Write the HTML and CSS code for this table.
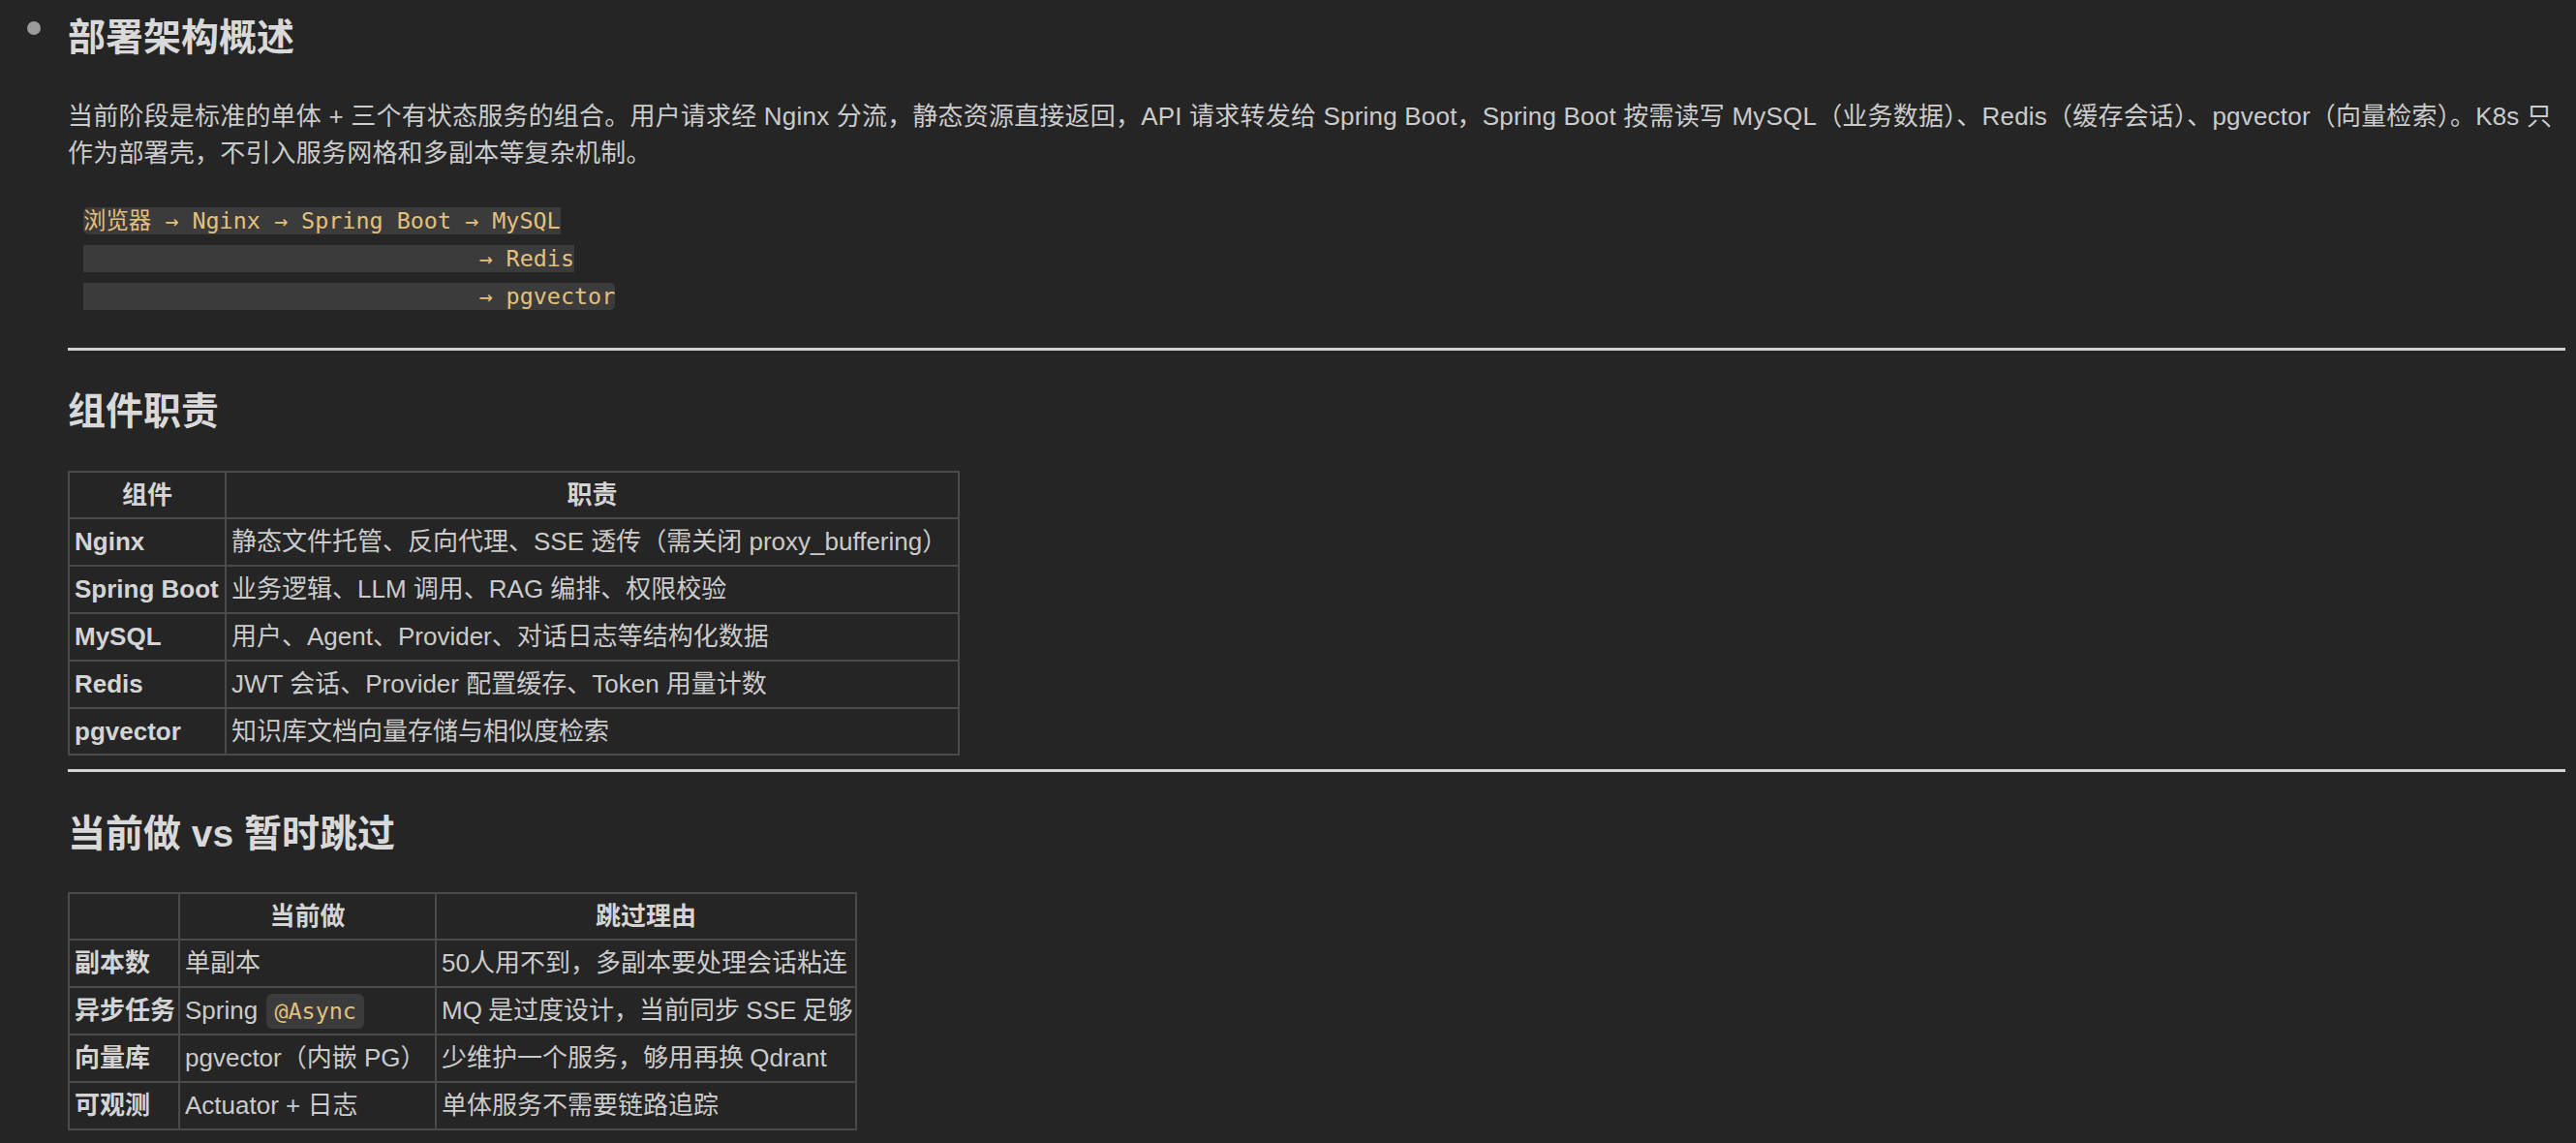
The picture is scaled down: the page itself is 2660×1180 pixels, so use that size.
FILE: index.html
```html
<!DOCTYPE html>
<html lang="zh-CN">
<head>
<meta charset="utf-8">
<title>部署架构概述</title>
<link rel="stylesheet" href="styles.css">
</head>
<body>
<ul class="list">
  <li class="item">
    <span class="bullet"></span>
    <div class="content">
      <h2 class="title">部署架构概述</h2>
      <p class="para">当前阶段是标准的单体 + 三个有状态服务的组合。用户请求经 Nginx 分流，静态资源直接返回，API 请求转发给 Spring Boot，Spring Boot 按需读写 MySQL（业务数据）、Redis（缓存会话）、pgvector（向量检索）。K8s 只作为部署壳，不引入服务网格和多副本等复杂机制。</p>
      <p class="flow"><code class="flow-code">浏览器 → Nginx → Spring Boot → MySQL
                             → Redis
                             → pgvector</code></p>
      <hr class="rule">
      <h2 class="heading">组件职责</h2>
      <table class="grid grid-roles">
        <thead>
          <tr><th class="c-name">组件</th><th class="c-duty">职责</th></tr>
        </thead>
        <tbody>
          <tr><td class="key">Nginx</td><td>静态文件托管、反向代理、SSE 透传（需关闭 proxy_buffering）</td></tr>
          <tr><td class="key">Spring Boot</td><td>业务逻辑、LLM 调用、RAG 编排、权限校验</td></tr>
          <tr><td class="key">MySQL</td><td>用户、Agent、Provider、对话日志等结构化数据</td></tr>
          <tr><td class="key">Redis</td><td>JWT 会话、Provider 配置缓存、Token 用量计数</td></tr>
          <tr><td class="key">pgvector</td><td>知识库文档向量存储与相似度检索</td></tr>
        </tbody>
      </table>
      <hr class="rule rule-2">
      <h2 class="heading heading-2">当前做 vs 暂时跳过</h2>
      <table class="grid grid-skip">
        <thead>
          <tr><th class="c-item"></th><th class="c-now">当前做</th><th class="c-why">跳过理由</th></tr>
        </thead>
        <tbody>
          <tr><td class="key">副本数</td><td>单副本</td><td class="why">50人用不到，多副本要处理会话粘连</td></tr>
          <tr><td class="key">异步任务</td><td>Spring <code class="cell-code">@Async</code></td><td class="why">MQ 是过度设计，当前同步 SSE 足够</td></tr>
          <tr><td class="key">向量库</td><td>pgvector（内嵌 PG）</td><td class="why">少维护一个服务，够用再换 Qdrant</td></tr>
          <tr><td class="key">可观测</td><td>Actuator + 日志</td><td class="why">单体服务不需要链路追踪</td></tr>
        </tbody>
      </table>
    </div>
  </li>
</ul>
</body>
</html>
```

FILE: styles.css
```css
html, body {
  margin: 0;
  padding: 0;
  background: #252525;
}

body {
  width: 2660px;
  height: 1180px;
  overflow: hidden;
  color: #cbcbcb;
  font-family: "Liberation Sans", "Noto Sans CJK SC", sans-serif;
  font-size: 26px;
  line-height: 38.8px;
}

.list {
  list-style: none;
  margin: 0;
  padding: 0;
}

.item {
  display: flex;
  align-items: flex-start;
}

.bullet {
  flex: none;
  width: 14px;
  height: 14px;
  border-radius: 50%;
  background: #9b9b9b;
  margin: 22px 28px 0 28px;
}

.content {
  flex: 1;
  min-width: 0;
  margin-right: 11px;
}

.title,
.heading {
  font-size: 39px;
  line-height: 52px;
  font-weight: 700;
  color: #d9d9d9;
  margin: 0;
}

.title {
  margin-top: 13px;
}

.para {
  margin: 35.7px 0 0;
  letter-spacing: 0.2px;
}

.flow {
  margin: 30px 0 0;
  padding-left: 16px;
  line-height: 39px;
}

.flow-code {
  white-space: pre;
  font-family: "DejaVu Sans Mono", "Noto Sans CJK SC", monospace;
  font-size: 23.4px;
  line-height: 1;
  color: #e3c07d;
  background: #3b3b3b;
  border-radius: 5px;
}

.rule {
  border: none;
  height: 3px;
  background: #d2d2d2;
  margin: 33.3px 0 0;
}

.rule-2 {
  margin-top: 13.7px;
}

.heading {
  margin-top: 37.5px;
}

.heading-2 {
  margin-top: 38px;
}

.grid {
  border-collapse: separate;
  border-spacing: 0;
  table-layout: fixed;
  border-top: 2px solid #4a4a4a;
  border-left: 2px solid #4a4a4a;
  margin-top: 34.5px;
}

.grid th,
.grid td {
  box-sizing: border-box;
  border-right: 2px solid #4a4a4a;
  border-bottom: 2px solid #4a4a4a;
  padding: 4px 5px;
  white-space: nowrap;
  text-align: left;
  vertical-align: middle;
  font-weight: 400;
}

.grid th {
  text-align: center;
  font-weight: 700;
  color: #d4d4d4;
}

.grid td.key {
  font-weight: 700;
  color: #d4d4d4;
}

.grid-roles {
  width: 921px;
}

.c-name { width: 162px; }
.c-duty { width: 757px; }

.grid-skip {
  width: 815px;
  margin-top: 33.5px;
}

.c-item { width: 114px; }
.c-now { width: 265px; }
.c-why { width: 434px; }

.grid td.why {
  padding-right: 2px;
  word-spacing: -1px;
}

.cell-code {
  font-family: "DejaVu Sans Mono", "Noto Sans CJK SC", monospace;
  font-size: 23.4px;
  line-height: 1;
  color: #e3c07d;
  background: #3b3b3b;
  border-radius: 6px;
  padding: 4px 8px;
  margin-left: 2px;
}
```
